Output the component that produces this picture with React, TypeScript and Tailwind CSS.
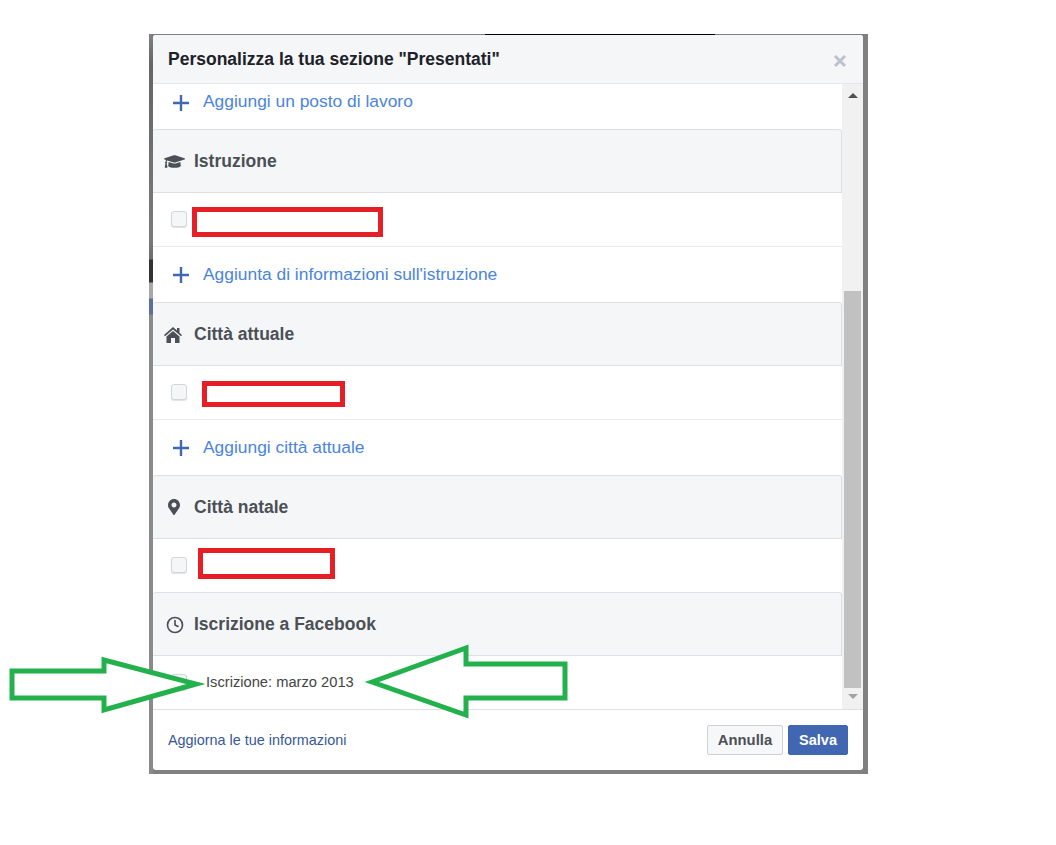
import React from "react";
import { FaGraduationCap, FaMapMarkerAlt } from "react-icons/fa";
import { FiClock } from "react-icons/fi";

const font = "font-['Liberation_Sans',Arial,sans-serif]";

function SectionHeader({ icon, label }: { icon: React.ReactNode; label: string }) {
  return (
    <div className="h-[64px] shrink-0 flex items-center bg-[#f5f6f7] border border-[#dddfe2] border-l-0 rounded-t-[3px] rounded-b-none">
      <span className="w-[41px] pl-[11px] flex justify-start text-[#4b4f56]">{icon}</span>
      <span className="text-[17.5px] font-bold text-[#4b4f56]">{label}</span>
    </div>
  );
}

function Checkbox() {
  return (
    <span className="block w-[16px] h-[16px] rounded-[3px] border border-[#d3d6db] bg-[#f5f6f7] shadow-[0_1px_1px_rgba(0,0,0,0.12)] -mt-[1px]" />
  );
}

function CheckRow({ last }: { last?: boolean }) {
  return (
    <div className={`${last ? "h-[53px]" : "h-[54px] border-b border-[#e9ebee]"} shrink-0 flex items-center pl-[18px]`}>
      <Checkbox />
    </div>
  );
}

function AddRow({ label, first }: { label: string; first?: boolean }) {
  return (
    <div className={`${first ? "h-[45px] pb-[9px]" : "h-[55px]"} shrink-0 flex items-center pl-[20px]`}>
      <svg width="16" height="16" viewBox="0 0 16 16" className="mr-[14px] mt-[1px]">
        <path d="M6.8 0h2.4v6.8H16v2.4H9.2V16H6.8V9.2H0V6.8h6.8z" fill="#4267b2" />
      </svg>
      <span className="text-[17.4px] text-[#4a84e0] -mt-[1px]">{label}</span>
    </div>
  );
}

function HomeIcon() {
  return (
    <svg width="18" height="16" viewBox="0 0 18 16" fill="currentColor" className="mt-[1px]">
      <path d="M9 0L13 3.5V1h2.5v4.7L18 8l-1 1.2L9 2.4 1 9.2 0 8Z" />
      <path d="M9 3.9L15.5 9.5V16H11v-5H7v5H2.5V9.5Z" />
    </svg>
  );
}

// Leftovers of the blurred page behind the dialog, visible along its edge
function BackdropEdges() {
  return (
    <>
      <div className="absolute left-[149px] top-[34px] w-[4px] h-[740px] bg-[linear-gradient(to_bottom,#808080_0px,#666_30px,#7a7a7a_205px,#6e6e6e_225px,#333_226px,#333_248px,#a8a8a8_249px,#a8a8a8_264px,#5a6f9e_265px,#5a6f9e_280px,#8a8a8a_281px,#8a8a8a_100%)]" />
      <div className="absolute left-[485px] top-[34px] w-[230px] h-[1px] bg-black" />
    </>
  );
}

function Annotations() {
  return (
    <>
      <div className="absolute left-[192px] top-[207px] w-[191px] h-[30px] border-[5px] border-[#e61e26]" />
      <div className="absolute left-[202px] top-[381px] w-[143px] h-[26px] border-[5px] border-[#e61e26]" />
      <div className="absolute left-[198px] top-[548px] w-[137px] h-[31px] border-[5px] border-[#e61e26]" />
      <svg className="absolute left-0 top-0 pointer-events-none" width="1056" height="845" fill="#fff">
        <path d="M12 671H104V660L196 684L104 710V698H12Z" stroke="#22b14c" strokeWidth="5" />
        <path d="M372 682L466 648V664H565V698H466V715Z" stroke="#22b14c" strokeWidth="5" />
      </svg>
    </>
  );
}

export default function App() {
  return (
    <div className={`${font} relative w-[1056px] h-[845px] bg-white overflow-hidden pt-[34px] pl-[149px]`}>
      <div className="w-[719px] h-[740px] bg-[#808080] pt-[1px] pl-[4px]">
        <BackdropEdges />
        <div className="relative w-[710px] h-[735px] bg-white rounded-[3px] flex flex-col overflow-hidden">
          {/* Header */}
          <div className="h-[49px] shrink-0 flex items-center justify-between bg-[#f5f6f7] border-b border-[#e5e5e5] pl-[15px] pr-[16px]">
            <span className="text-[17.5px] font-bold text-[#1d2129]">
              Personalizza la tua sezione "Presentati"
            </span>
            <svg width="14" height="14" viewBox="0 0 14 14" className="mt-[4px]">
              <path d="M2 2L12 12M12 2L2 12" stroke="#bec2c9" strokeWidth="3" />
            </svg>
          </div>

          {/* Scrolling body */}
          <div className="h-[626px] shrink-0 flex border-b border-[#dddfe2]">
            <div className="w-[689px] shrink-0 flex flex-col">
              <AddRow label="Aggiungi un posto di lavoro" first />
              <SectionHeader icon={<FaGraduationCap size={21} className="mt-[1px]" />} label="Istruzione" />
              <CheckRow />
              <AddRow label="Aggiunta di informazioni sull'istruzione" />
              <SectionHeader icon={<HomeIcon />} label="Città attuale" />
              <CheckRow />
              <AddRow label="Aggiungi città attuale" />
              <SectionHeader icon={<FaMapMarkerAlt size={16} className="ml-[2px]" />} label="Città natale" />
              <CheckRow last />
              <SectionHeader icon={<FiClock size={18} strokeWidth={2.2} className="ml-[2px] mt-[2px]" />} label="Iscrizione a Facebook" />
              <div className="h-[53px] flex items-center pl-[18px] text-[14.7px] text-[#444]">
                <Checkbox />
                <span className="ml-[19px]">Iscrizione: marzo 2013</span>
              </div>
            </div>

            {/* Scrollbar */}
            <div className="w-[21px] shrink-0 bg-[#f1f1f1] flex flex-col items-center">
              <svg width="10" height="5" viewBox="0 0 10 5" className="mt-[9px]">
                <path d="M5 0L10 5H0Z" fill="#505050" />
              </svg>
              <div className="w-[17px] h-[397px] bg-[#c1c1c1] mt-[193px]" />
              <svg width="10" height="5" viewBox="0 0 10 5" className="mt-[6px]">
                <path d="M0 0H10L5 5Z" fill="#a3a3a3" />
              </svg>
            </div>
          </div>

          {/* Footer */}
          <div className="flex-1 flex items-center justify-between pl-[15px] pr-[15px]">
            <span className="text-[14.4px] text-[#365899] mt-[1px]">Aggiorna le tue informazioni</span>
            <div className="flex gap-[5px]">
              <button className="w-[76px] h-[30px] rounded-[2px] border border-[#ced0d4] bg-[#f6f7f9] text-[14.8px] font-bold text-[#4b4f56]">
                Annulla
              </button>
              <button className="w-[60px] h-[30px] rounded-[2px] border border-[#4267b2] bg-[#4267b2] text-[14.5px] font-bold text-white">
                <span className="relative top-[1px]">Salva</span>
              </button>
            </div>
          </div>
        </div>
      </div>
      <Annotations />
    </div>
  );
}
